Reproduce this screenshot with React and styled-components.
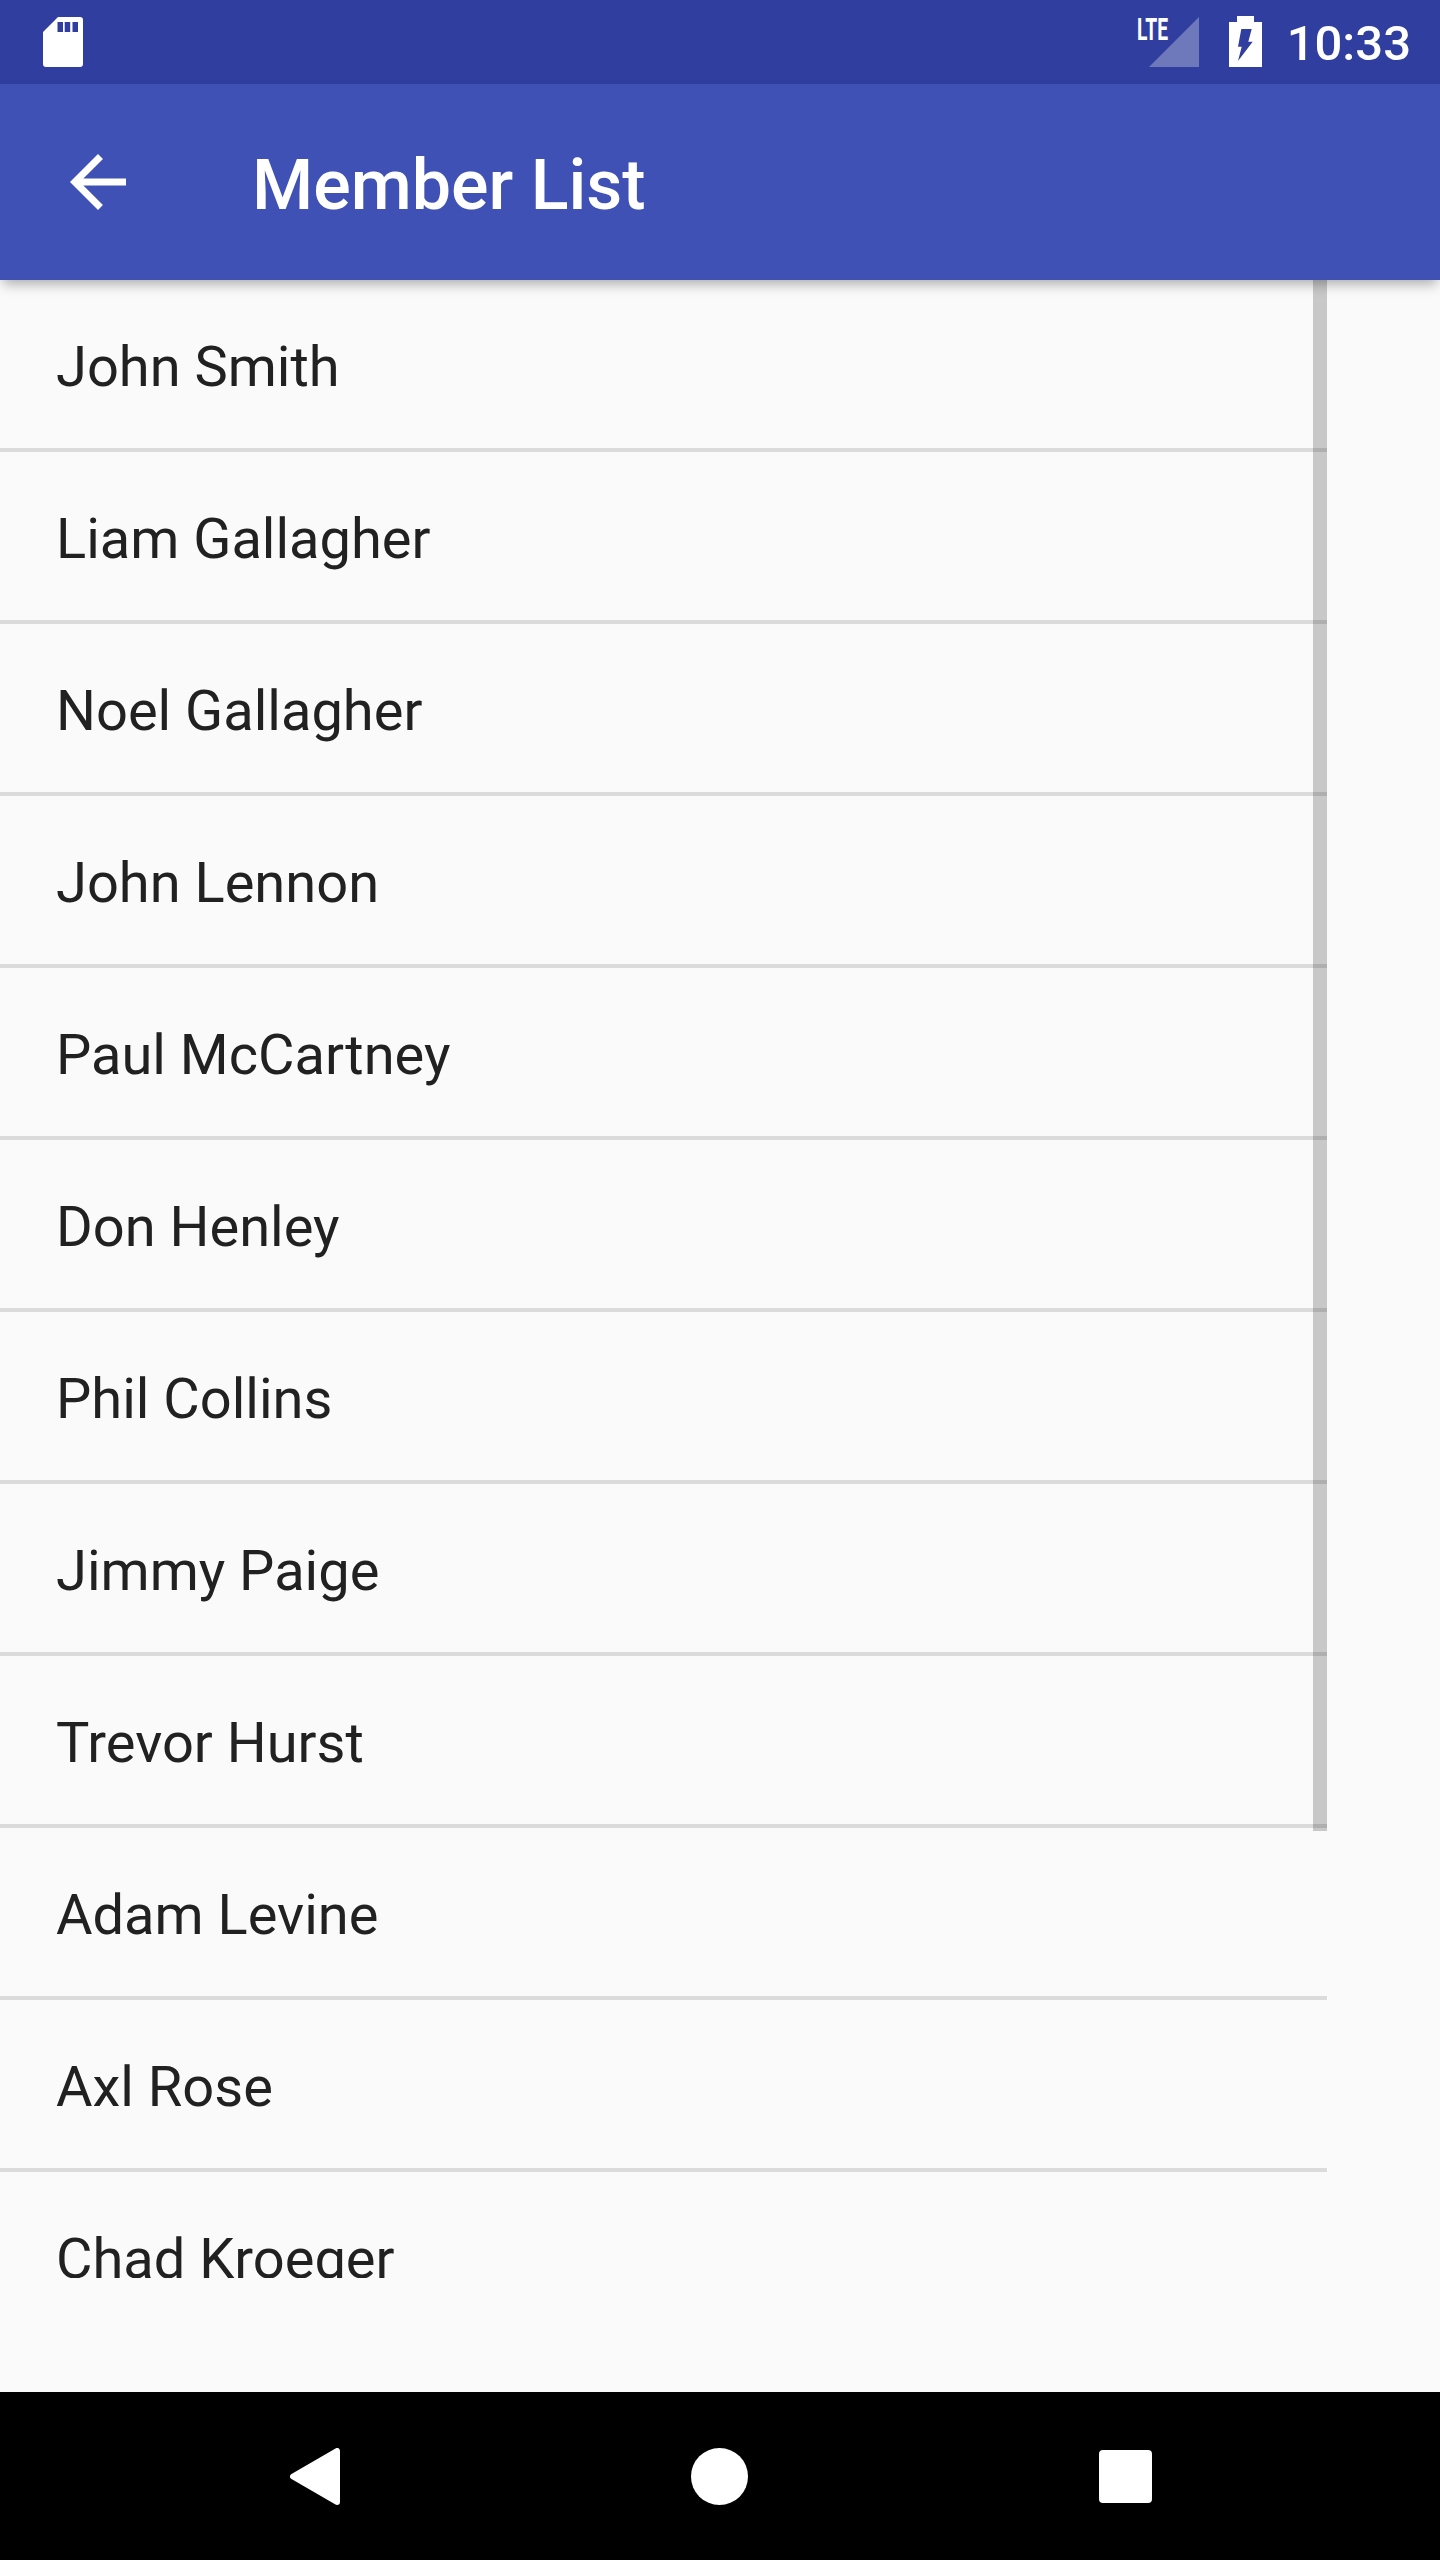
import React from "react";
import styled, { createGlobalStyle } from "styled-components";

const Global = createGlobalStyle`
  html, body { margin: 0; padding: 0; background: #fafafa; }
  * { box-sizing: border-box; }
`;

const Screen = styled.div`
  display: flex;
  flex-direction: column;
  width: 1440px;
  height: 2560px;
  overflow: hidden;
  background: #fafafa;
  font-family: Roboto, "Liberation Sans", sans-serif;
`;

const StatusBar = styled.div`
  flex: 0 0 84px;
  display: flex;
  align-items: flex-start;
  justify-content: space-between;
  padding: 16px 29px 0 43px;
  background: #303f9f;
  color: #fff;
`;

const SdIcon = styled.svg`
  display: block;
  width: 40px;
  height: 50px;
  margin-top: 1px;
`;

const StatusRight = styled.div`
  display: flex;
  align-items: flex-start;
`;

const SignalIcon = styled.svg`
  display: block;
  width: 62px;
  height: 51px;
  margin-right: 30px;
  overflow: visible;
`;

const BatteryIcon = styled.svg`
  display: block;
  width: 33px;
  height: 51px;
  margin-right: 25px;
`;

const Clock = styled.span`
  font-size: 49px;
  font-weight: 500;
  line-height: 51px;
  margin-top: 2px;
`;

const AppBar = styled.header`
  position: relative;
  z-index: 2;
  flex: 0 0 196px;
  display: flex;
  align-items: center;
  padding-left: 56px;
  background: #3f51b5;
  box-shadow: 0 7px 12px -3px rgba(0, 0, 0, 0.32);
`;

const BackIcon = styled.svg`
  display: block;
  width: 84px;
  height: 84px;
  margin-right: 112px;
  fill: #fff;
`;

const Title = styled.h1`
  margin: 6px 0 0;
  font-size: 70px;
  font-weight: 500;
  line-height: 82px;
  color: #fff;
`;

const Main = styled.main`
  flex: 1 1 auto;
  min-height: 0;
`;

const ListViewport = styled.div`
  position: relative;
  width: 1327px;
  height: 1998px;
  overflow: hidden;
`;

const Row = styled.div`
  height: 172px;
  display: flex;
  align-items: center;
  padding: 0 0 4px 56px;
  border-bottom: 4px solid rgba(0, 0, 0, 0.12);
  font-size: 56px;
  line-height: 66px;
  color: #212121;
`;

const RowText = styled.span`
  display: block;
  margin-top: 10px;
`;

const Scrollbar = styled.div`
  position: absolute;
  top: 0;
  right: 0;
  width: 14px;
  height: 1551px;
  background: rgba(0, 0, 0, 0.2);
`;

const NavBar = styled.nav`
  flex: 0 0 168px;
  display: flex;
  align-items: center;
  gap: 351px;
  padding-left: 290px;
  background: #000;
`;

const NavBack = styled.svg`
  display: block;
  width: 50px;
  height: 57px;
`;

const NavHome = styled.div`
  width: 57px;
  height: 57px;
  border-radius: 50%;
  background: #fff;
`;

const NavRecent = styled.div`
  width: 53px;
  height: 53px;
  border-radius: 4px;
  background: #fff;
`;

const names = [
  "John Smith",
  "Liam Gallagher",
  "Noel Gallagher",
  "John Lennon",
  "Paul McCartney",
  "Don Henley",
  "Phil Collins",
  "Jimmy Paige",
  "Trevor Hurst",
  "Adam Levine",
  "Axl Rose",
  "Chad Kroeger",
];

export default function App() {
  return (
    <Screen>
      <Global />
      <StatusBar>
        <SdIcon viewBox="0 0 40 50">
          <path
            fill="#fff"
            fillRule="evenodd"
            d="M15 0H37a3 3 0 0 1 3 3V47a3 3 0 0 1-3 3H3a3 3 0 0 1-3-3V15ZM14.5 5V15H20V5ZM21.7 5V15H27.2V5ZM29.5 5V15H35V5Z"
          />
        </SdIcon>
        <StatusRight>
          <SignalIcon viewBox="0 0 62 51">
            <path fill="#fff" fillOpacity="0.3" d="M62 1V51H12Z" />
            <text
              x="0"
              y="24"
              fill="#fff"
              fontFamily="Roboto, sans-serif"
              fontWeight="700"
              fontSize="31"
              textLength="31"
              lengthAdjust="spacingAndGlyphs"
            >
              LTE
            </text>
          </SignalIcon>
          <BatteryIcon viewBox="0 0 33 51">
            <path
              fill="#fff"
              fillRule="evenodd"
              d="M8 0H25V6H33V51H0V6H8ZM12.3 13H22.7L19.3 25.7H23.7L9 45L12.7 30.7H9Z"
            />
          </BatteryIcon>
          <Clock>10:33</Clock>
        </StatusRight>
      </StatusBar>
      <AppBar>
        <BackIcon viewBox="0 0 24 24">
          <path d="M20 11H7.83l5.59-5.59L12 4l-8 8 8 8 1.41-1.41L7.83 13H20v-2z" />
        </BackIcon>
        <Title>Member List</Title>
      </AppBar>
      <Main>
        <ListViewport>
          {names.map((n) => (
            <Row key={n}>
              <RowText>{n}</RowText>
            </Row>
          ))}
          <Scrollbar />
        </ListViewport>
      </Main>
      <NavBar>
        <NavBack viewBox="0 0 50 57">
          <path
            fill="#fff"
            stroke="#fff"
            strokeWidth="6"
            strokeLinejoin="round"
            d="M47 3V54L3 28.5Z"
          />
        </NavBack>
        <NavHome />
        <NavRecent />
      </NavBar>
    </Screen>
  );
}
